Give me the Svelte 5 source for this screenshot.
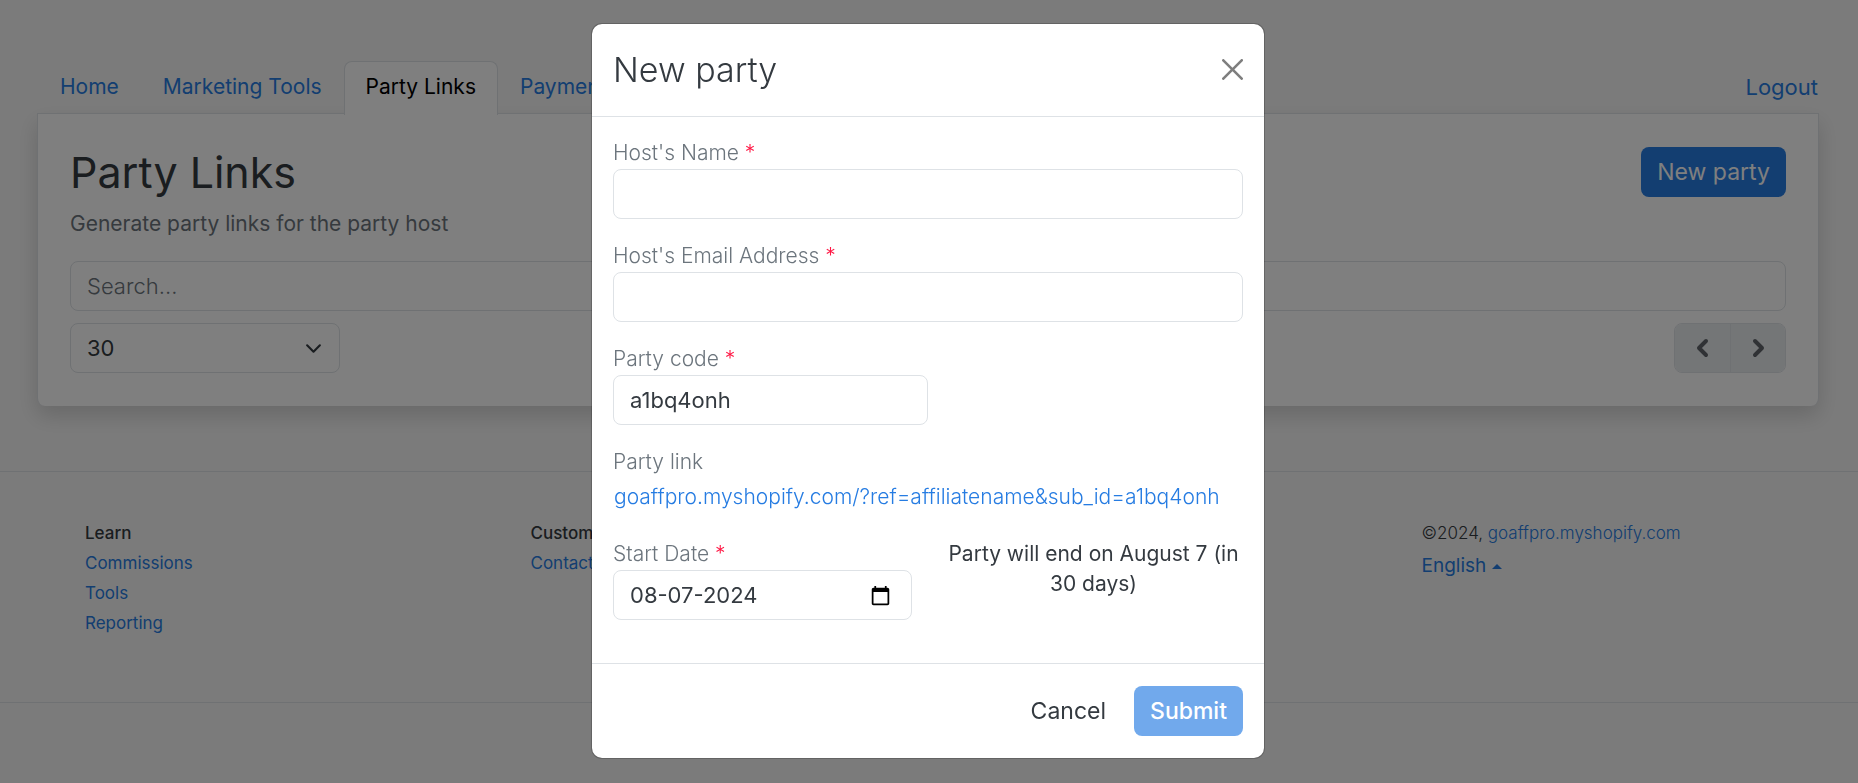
<script>
  const tabs = [
    { label: 'Home' },
    { label: 'Marketing Tools' },
    { label: 'Party Links', active: true },
    { label: 'Payments' }
  ];
  const columns = [
    { title: 'Learn', links: ['Commissions', 'Tools', 'Reporting'] },
    { title: 'Customer', links: ['Contact'] }
  ];
  let name = $state('');
  let email = $state('');
  let code = $state('a1bq4onh');
  let startDate = $state('08-07-2024');
  let search = $state('');
</script>

<div class="page">
  <header class="topbar">
    <nav class="tabs">
      {#each tabs as tab}
        <a href="#top" class="tab" class:active={tab.active}>{tab.label}</a>
      {/each}
    </nav>
    <a href="#logout" class="logout">Logout</a>
  </header>

  <main class="card">
    <div class="card-head">
      <div>
        <h1>Party Links</h1>
        <p class="lead">Generate party links for the party host</p>
      </div>
      <button class="btn primary">New party</button>
    </div>
    <input class="control" type="search" placeholder="Search..." aria-label="Search" bind:value={search} />
    <div class="card-tools">
      <select class="control page-size" aria-label="Rows per page">
        <option>30</option>
      </select>
      <div class="pager">
        <button aria-label="Previous page">
          <svg viewBox="0 0 24 24"><path d="m15 5-7 7 7 7" /></svg>
        </button>
        <button aria-label="Next page">
          <svg viewBox="0 0 24 24"><path d="m9 5 7 7-7 7" /></svg>
        </button>
      </div>
    </div>
  </main>

  <footer class="footer">
    {#each columns as col}
      <div class="footer-col">
        <strong>{col.title}</strong>
        {#each col.links as link}
          <a href="#footer">{link}</a>
        {/each}
      </div>
    {/each}
    <div class="footer-col"></div>
    <div class="footer-col">
      <span class="copyright">©2024, <a href="#shop">goaffpro.myshopify.com</a></span>
      <button class="language">English <span class="caret"></span></button>
    </div>
  </footer>
</div>

<div class="backdrop">
  <form class="modal" role="dialog" aria-modal="true" aria-labelledby="modal-title" onsubmit={(e) => e.preventDefault()}>
    <div class="modal-header">
      <h2 id="modal-title">New party</h2>
      <button type="button" class="close" aria-label="Close">
        <svg viewBox="0 0 16 16"><path d="M.293.293a1 1 0 0 1 1.414 0L8 6.586 14.293.293a1 1 0 1 1 1.414 1.414L9.414 8l6.293 6.293a1 1 0 0 1-1.414 1.414L8 9.414l-6.293 6.293a1 1 0 0 1-1.414-1.414L6.586 8 .293 1.707a1 1 0 0 1 0-1.414z" /></svg>
      </button>
    </div>

    <div class="modal-body">
      <div class="field">
        <label for="host-name">Host's Name <span class="req">*</span></label>
        <input id="host-name" class="control" bind:value={name} />
      </div>
      <div class="field">
        <label for="host-email">Host's Email Address <span class="req">*</span></label>
        <input id="host-email" class="control" type="email" bind:value={email} />
      </div>
      <div class="field">
        <label for="party-code">Party code <span class="req">*</span></label>
        <input id="party-code" class="control half" bind:value={code} />
      </div>
      <div class="field link-field">
        <span class="caption">Party link</span>
        <a href="#party">goaffpro.myshopify.com/?ref=affiliatename&sub_id={code}</a>
      </div>
      <div class="dates">
        <div class="field">
          <label for="start-date">Start Date <span class="req">*</span></label>
          <div class="control date">
            <input id="start-date" bind:value={startDate} />
            <button type="button" aria-label="Open calendar">
              <svg viewBox="0 0 24 24"><path d="M20 3h-1V1h-2v2H7V1H5v2H4c-1.1 0-2 .9-2 2v16c0 1.100.9 2 2 2h16c1.100 0 2-.9 2-2V5c0-1.100-.9-2-2-2zm0 18H4V8h16v13z" /></svg>
            </button>
          </div>
        </div>
        <p class="ends">Party will end on August 7 (in 30 days)</p>
      </div>
    </div>

    <div class="modal-footer">
      <button type="button" class="btn plain">Cancel</button>
      <button type="submit" class="btn primary" disabled>Submit</button>
    </div>
  </form>
</div>

<style>
  :global(body) {
    background: #f7f7f7;
    color: #343a40;
    font: 400 21px/30px Inter, "Open Sans", sans-serif;
  }
  * { box-sizing: border-box; }
  h1, h2, p { margin: 0; }
  a { color: #267ce2; text-decoration: none; }
  button, input, select { font: inherit; color: inherit; }
  button { margin: 0; padding: 0; border: 0; background: none; cursor: pointer; }

  .page { padding-top: 61px; }
  .topbar {
    display: flex;
    justify-content: space-between;
    align-items: center;
    margin: 0 40px 0 38px;
    height: 52px;
  }
  .tabs { display: flex; align-self: flex-start; }
  .tab {
    height: 54px;
    padding: 10px 21px;
    border: 1px solid transparent;
    border-radius: 8px 8px 0 0;
  }
  .tab.active {
    position: relative;
    z-index: 1;
    background: #fff;
    border-color: #dee2e6;
    border-bottom: 0;
    color: #000;
  }
  .logout { font-size: 22px; }

  .card {
    margin: 0 39px 0 37px;
    padding: 33px 32px;
    background: #fff;
    border: 1px solid #dee2e6;
    border-bottom: 0;
    border-radius: 0 0 8px 8px;
    box-shadow: 0 10px 21px rgba(0, 0, 0, 0.15);
  }
  .card-head {
    display: flex;
    justify-content: space-between;
    align-items: flex-start;
    margin-bottom: 22px;
  }
  h1 { font-size: 43px; line-height: 50px; font-weight: 400; }
  .lead { margin-top: 12px; color: #6c757d; }

  .control {
    display: block;
    width: 100%;
    height: 50px;
    padding: 0 16px;
    border: 1px solid #dee2e6;
    border-radius: 8px;
    background: #fff;
    font-size: 22px;
    outline: none;
  }
  .control::placeholder { color: #6c757d; opacity: 1; font-weight: 300; }
  .card-tools {
    display: flex;
    justify-content: space-between;
    margin-top: 12px;
  }
  .page-size {
    width: 270px;
    appearance: none;
    background: #fff url("data:image/svg+xml,%3csvg xmlns='http://www.w3.org/2000/svg' viewBox='0 0 16 16'%3e%3cpath fill='none' stroke='%23343a40' stroke-linecap='round' stroke-linejoin='round' stroke-width='2' d='m2 5 6 6 6-6'/%3e%3c/svg%3e") no-repeat right 17px center / 17px;
  }
  .pager { display: flex; border-radius: 8px; overflow: hidden; border: 1px solid #dee2e6; }
  .pager button {
    display: grid;
    place-items: center;
    width: 55px;
    background: #e9ecef;
  }
  .pager button + button { border-left: 1px solid #dee2e6; }
  .pager svg {
    width: 24px;
    fill: none;
    stroke: #60656b;
    stroke-width: 4;
    stroke-linecap: round;
    stroke-linejoin: round;
  }

  .footer {
    display: grid;
    grid-template-columns: repeat(4, 1fr);
    height: 232px;
    margin-top: 65px;
    padding: 46px 38px;
    border: 1px solid #dee2e6;
    border-width: 1px 0;
    font-size: 17px;
  }
  .footer-col {
    display: flex;
    flex-direction: column;
    align-items: flex-start;
    padding-left: 47px;
  }
  .copyright { font-weight: 300; }
  strong { font-weight: 500; }
  .language {
    display: flex;
    align-items: center;
    gap: 6px;
    margin-top: 3px;
    color: #267ce2;
    font-size: 19px;
  }
  .caret {
    border: 5px solid transparent;
    border-top: 0;
    border-bottom: 5px solid currentColor;
  }

  .btn {
    height: 50px;
    padding: 0 16px;
    border-radius: 8px;
    font-size: 23px;
    line-height: 32px;
  }
  .primary { background: #267ce2; color: #fff; }
  .primary:disabled { opacity: 0.65; font-weight: 500; }

  .backdrop {
    position: fixed;
    inset: 0;
    z-index: 10;
    display: flex;
    justify-content: center;
    align-items: flex-start;
    padding: 23px 2px 0 0;
    background: rgba(0, 0, 0, 0.5);
    overflow: auto;
  }
  .modal {
    width: 100%;
    max-width: 674px;
    background: #fff;
    background-clip: padding-box;
    border: 1px solid rgba(0, 0, 0, 0.2);
    border-radius: 11px;
  }
  .modal-header {
    display: flex;
    justify-content: space-between;
    align-items: center;
    padding: 21px 21px 22px;
    border-bottom: 1px solid #dee2e6;
  }
  h2 { font-size: 34px; line-height: 49px; font-weight: 300; }
  .close { display: grid; width: 21px; height: 21px; opacity: 0.5; }
  .close svg { width: 21px; fill: #000; }
  .modal-body {
    display: flex;
    flex-direction: column;
    gap: 22px;
    padding: 21px 21px 43px;
  }
  .field { display: flex; flex-direction: column; }
  label, .caption { padding-bottom: 2px; color: #6c757d; font-weight: 300; line-height: 29px; }
  .req { color: #ff1744; }
  .half { width: 50%; }
  .link-field a { padding: 4px 0 5px 1px; font-weight: 300; }
  .dates {
    display: grid;
    grid-template-columns: minmax(0, 1fr) minmax(0, 1fr);
    gap: 32px;
  }
  .date { display: flex; align-items: center; padding-right: 20px; }
  .date input {
    flex: 1;
    min-width: 0;
    padding: 0;
    border: 0;
    outline: 0;
    background: none;
  }
  .date svg { display: block; width: 21px; height: 21px; fill: #000; }
  .ends { text-align: center; }
  .modal-footer {
    display: flex;
    justify-content: flex-end;
    gap: 12px;
    padding: 22px 21px;
    border-top: 1px solid #dee2e6;
  }
</style>
